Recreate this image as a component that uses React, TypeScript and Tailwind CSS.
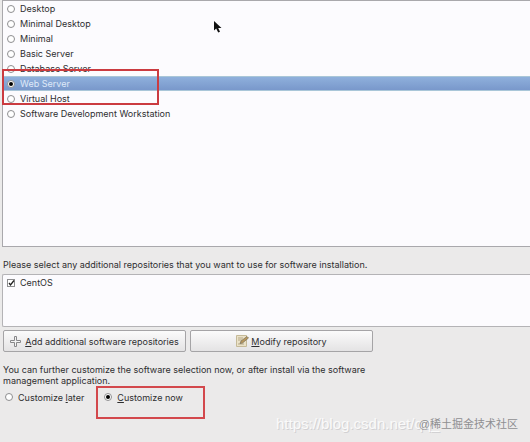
import React, { useState } from 'react';

const packages = [
  'Desktop',
  'Minimal Desktop',
  'Minimal',
  'Basic Server',
  'Database Server',
  'Web Server',
  'Virtual Host',
  'Software Development Workstation',
];

const radioStyle =
  "grid size-2 shrink-0 appearance-none place-content-center rounded-full border border-[#8e8e90] bg-white before:size-1 before:rounded-full checked:before:bg-black";

const App: React.FC = () => {
  const [selected, setSelected] = useState('Web Server');
  const [customize, setCustomize] = useState('now');
  const [centos, setCentos] = useState(true);

  return (
    <main className="relative min-h-screen bg-[#ebeaea] pl-[2px] font-['Inter',sans-serif] text-[9px] leading-[11px] text-[#2e2e30]">
      {/* Package sets */}
      <div className="relative h-[247px] border border-r-0 border-[#a9a8ac] bg-[#fcfbfe]">
        {packages.map((name) => (
          <label
            key={name}
            className={`flex h-[15px] items-center gap-[5px] pl-1 ${selected === name ? 'border-y border-[#a9c6d8] bg-linear-to-b from-[#8fb0dc] to-[#7998cb] text-[#dfe9f8]' : ''}`}
          >
            <input
              type="radio"
              name="package"
              className={radioStyle}
              checked={selected === name}
              onChange={() => setSelected(name)}
            />
            {name}
          </label>
        ))}
        <div className="pointer-events-none absolute -left-px top-[68px] h-[36px] w-[157px] border-2 border-[#cb3b40]" />
        <svg className="absolute left-[211px] top-5 h-3 w-2" viewBox="0 0 8 12">
          <path d="M0 0v9.500l2.200-2 2 4 1.800-.8-1.800-3.700H7.500z" fill="#111" />
        </svg>
      </div>

      <p className="pl-px pt-3">
        Please select any additional repositories that you want to use for software installation.
      </p>

      {/* Repositories */}
      <div className="mt-1 h-[53px] rounded-l-xs border border-r-0 border-[#b4b3b6] bg-[#fcfbfe]">
        <label className="flex h-[15px] items-center gap-[5px] pl-1">
          <input type="checkbox" className="peer sr-only" checked={centos} onChange={() => setCentos(!centos)} />
          <svg className="size-2 overflow-visible [&>path]:hidden peer-checked:[&>path]:block" viewBox="0 0 8 8" fill="none">
            <rect x=".5" y=".5" width="7" height="7" fill="#fff" stroke="#8e8e90" />
            <path d="M2 4l1.500 2L7 1.500" stroke="#222" strokeWidth="1.300" />
          </svg>
          CentOS
        </label>
      </div>

      <div className="mt-[3px] flex gap-1 pl-px">
        <button className="flex h-[22px] w-[183px] items-center justify-center gap-1 rounded-xs border border-[#a5a4a6] bg-linear-to-b from-[#fbfbfb] to-[#e4e3e4]">
          <svg className="size-[11px]" viewBox="0 0 11 11">
            <path d="M4.500 .5h2v4h4v2h-4v4h-2v-4h-4v-2h4z" fill="#f4f4f4" stroke="#88888a" />
          </svg>
          <span><u>A</u>dd additional software repositories</span>
        </button>
        <button className="flex h-[22px] w-[183px] items-center justify-center gap-0.5 rounded-xs border border-[#a5a4a6] bg-linear-to-b from-[#fbfbfb] to-[#e4e3e4]">
          <svg className="h-3 w-[13px]" viewBox="0 0 13 12">
            <path d="M.5 .5h10v11H.5z" fill="#ebe2c8" stroke="#c5ba98" />
            <path d="M2 3h5M2 5h4M2 9h6" stroke="#b5a988" />
            <path d="M4 8.500l1-2.500L11 1.500l1.500 1.500L6.500 8z" fill="#b9985c" stroke="#77705f" strokeWidth=".7" />
          </svg>
          <span><u>M</u>odify repository</span>
        </button>
      </div>

      <p className="w-[380px] pl-px pt-3">
        You can further customize the software selection now, or after install via the software management application.
      </p>

      <div className="mt-1 flex h-[14px] items-center gap-5 pl-[3px]">
        <label className="flex items-center gap-[5px]">
          <input type="radio" name="customize" className={radioStyle} checked={customize === 'later'} onChange={() => setCustomize('later')} />
          <span>Customize <u>l</u>ater</span>
        </label>
        <label className="relative flex items-center gap-[5px]">
          <input type="radio" name="customize" className={radioStyle} checked={customize === 'now'} onChange={() => setCustomize('now')} />
          <span><u>C</u>ustomize now</span>
          <span className="pointer-events-none absolute -left-2 -top-[6px] h-[33px] w-[109px] border-2 border-[#d3484c]" />
        </label>
      </div>

      <div className="pointer-events-none absolute bottom-2 left-[276px] whitespace-nowrap font-['Liberation_Sans',sans-serif] text-[15px] leading-5 text-[#fafafa] [text-shadow:1px_1px_0_#d2d1d3]">
        https://blog.csdn.net/qq_
      </div>
      <div className="pointer-events-none absolute bottom-2 right-3 whitespace-nowrap font-['Liberation_Sans','Noto_Sans_CJK_SC',sans-serif] text-[11px] leading-5 text-[#8f8f92]">
        @稀土掘金技术社区
      </div>
    </main>
  );
};

export default App;
